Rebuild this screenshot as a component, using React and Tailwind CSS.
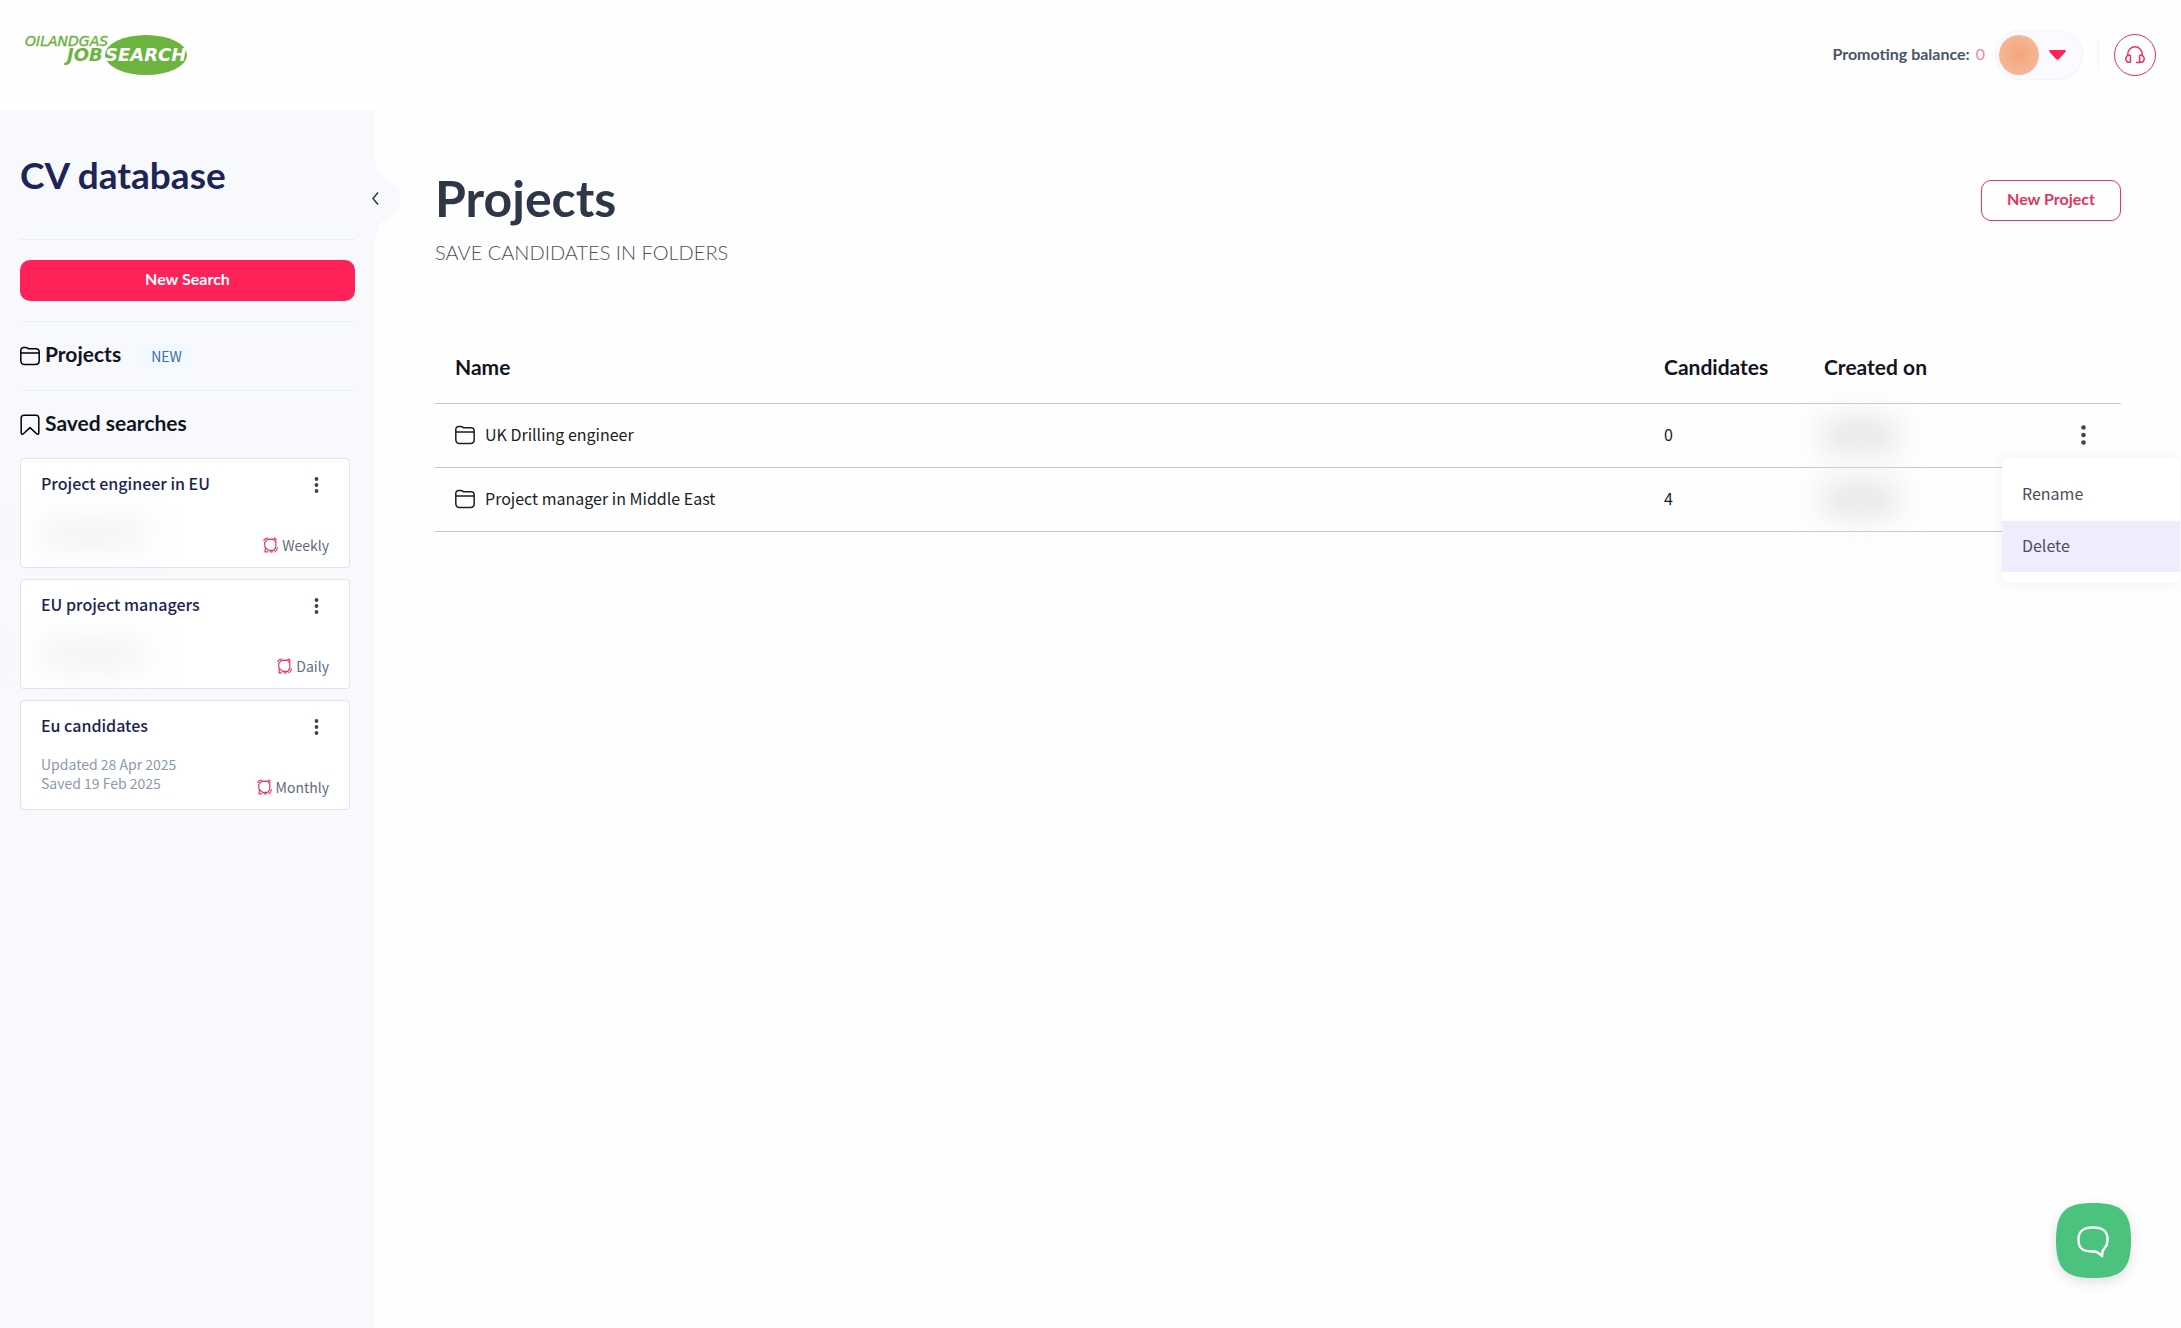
import React, { useState } from "react";

const savedSearches = [
  { id: 1, title: "Project engineer in EU", frequency: "Weekly" },
  { id: 2, title: "EU project managers", frequency: "Daily" },
  { id: 3, title: "Eu candidates", frequency: "Monthly", updated: "28 Apr 2025", saved: "19 Feb 2025" },
];

const projects = [
  { id: 1, name: "UK Drilling engineer", candidates: 0 },
  { id: 2, name: "Project manager in Middle East", candidates: 4 },
];

function Logo() {
  return (
    <svg width="172" height="48" viewBox="-4 -4 172 48" role="img" aria-label="Oil and Gas Job Search">
      <ellipse cx="122" cy="20" rx="41" ry="20" fill="#6cb33f" />
      <g fontFamily='"DejaVu Sans", sans-serif' fontStyle="italic">
        <text x="1" y="11" fontSize="14" fill="#6cb33f" stroke="#6cb33f" strokeWidth="0.4">OILANDGAS</text>
        <text x="43" y="26" fontSize="18" fontWeight="700" fill="#6cb33f">JOB</text>
        <text x="81" y="26" fontSize="18" fontWeight="700" fill="#fff">SEARCH</text>
      </g>
    </svg>
  );
}

function FolderIcon() {
  return (
    <svg width="20" height="20" viewBox="0 0 20 20" fill="none" stroke="currentColor" strokeWidth="1.5" strokeLinejoin="round" className="shrink-0">
      <path d="M.8 7V4.4C.8 2.600 2 1.400 3.600 1.400h2.200C7.400 1.400 7.600 2.800 9 2.800h6.800c2 0 3.400 1.200 3.400 3.200v8.600c0 2.400-1.400 4-3.800 4H4.600c-2.400 0-3.800-1.600-3.800-4V7Z" />
      <path d="M.8 7h18.400" />
    </svg>
  );
}

function BookmarkIcon() {
  return (
    <svg width="20" height="22" viewBox="0 0 20 22" fill="none" stroke="currentColor" strokeWidth="1.500" strokeLinejoin="round" className="shrink-0">
      <path d="M1.200 4c0-1.800 1-2.800 2.800-2.800h12c1.800 0 2.800 1 2.800 2.800v14.800c0 1.600-1.200 2-2.200 1L10 13.600l-6.600 6.200c-1 1-2.200.6-2.200-1V4Z" />
    </svg>
  );
}

function AlarmIcon() {
  return (
    <svg width="15" height="16" viewBox="0 0 15 16" fill="none" stroke="#e5345d" strokeWidth="1.200" strokeLinecap="round" strokeLinejoin="round">
      <path d="M4.500 2.400 10.500 2.200 12.800 5v5.200L10.800 13.400H5.600L2 10.200 1.600 5.600Z" />
      <path d="M.8 3.400C1.400 2 2.600 1.200 4.600 1M11.400 1.200c1 .2 1.600.8 1.800 2M2.400 11.600 2 14.800h2.600M14.400 10.800c-.2 1.800-1 3.200-2.400 4M7 14.800h2.400" />
    </svg>
  );
}

function DotsIcon() {
  return (
    <svg width="5" height="20" viewBox="0 0 5 20" fill="currentColor">
      <circle cx="2.500" cy="2.500" r="2.300" />
      <circle cx="2.500" cy="10" r="2.300" />
      <circle cx="2.500" cy="17.500" r="2.300" />
    </svg>
  );
}

function HeadsetIcon() {
  return (
    <svg width="20" height="18" viewBox="0 0 20 18" fill="none" stroke="#e5345d" strokeWidth="1.500" strokeLinecap="round" strokeLinejoin="round">
      <path d="M2.800 9.600V8a7.200 7.200 0 0 1 14.400 0v1.600" />
      <path d="M5.400 9.400v6.800c-3 .6-4.600-1-4.600-3.400s1.600-4 4.600-3.400ZM14.600 9.400v6.800c3 .6 4.600-1 4.600-3.400s-1.600-4-4.600-3.400ZM14.600 16.600h-3" />
    </svg>
  );
}

function Header() {
  return (
    <header className="flex h-[111px] shrink-0 items-center justify-between border-b border-[#fbfbfd] pr-[25px] pl-5">
      <a href="#home">
        <Logo />
      </a>
      <div className="flex items-center">
        <p className="mr-[10px] flex gap-1.5 pb-0.5 text-base font-bold text-[#4a5568]">
          Promoting balance: <span className="font-normal text-[#f7879f]">0</span>
        </p>
        <button type="button" aria-label="Account" className="flex h-[50px] w-[88px] items-center gap-2.5 rounded-full border border-[#f3f3f8] bg-[#fafaff] pl-[3px]">
          <span className="size-10 rounded-full bg-radial from-[#f4a57c] to-[#f7bd9f]" />
          <svg width="17" height="10" viewBox="0 0 17 10" fill="#ff2259">
            <path d="M1.500 0h14c1.300 0 1.800 1.200.9 2.100L10 9.100c-.9.900-2.100.9-3 0L.6 2.100C-.3 1.200.2 0 1.500 0Z" />
          </svg>
        </button>
        <div className="mx-[15px] h-8 w-px bg-[#f5f5f8]" />
        <button type="button" aria-label="Support" className="flex size-[42px] items-center justify-center rounded-full border border-[#e5345d]">
          <HeadsetIcon />
        </button>
      </div>
    </header>
  );
}

function SearchCard({ search }) {
  return (
    <li className="flex h-[110px] flex-col justify-between rounded border border-[#dfe3ec] bg-white px-5 pt-3 pb-3">
      <div className="flex items-center justify-between">
        <h3 className="pb-1 font-['Noto_Sans_CJK_SC',sans-serif] text-base leading-6 font-medium text-[#1c2350]">{search.title}</h3>
        <button type="button" aria-label={`Options for ${search.title}`} className="mr-2 flex h-7 items-center text-[#3c4450]">
          <svg width="9" height="16" viewBox="0 0 9 16" fill="currentColor">
            <circle cx="4.500" cy="2" r="1.900" />
            <circle cx="4.500" cy="8" r="1.900" />
            <circle cx="4.500" cy="14" r="1.900" />
          </svg>
        </button>
      </div>
      <div className="flex items-end justify-between">
        {search.updated ? (
          <div className="pb-1 text-sm leading-[19px] text-[#8d99ab]">
            <p>Updated {search.updated}</p>
            <p>Saved {search.saved}</p>
          </div>
        ) : (
          <div className="mb-2 h-7 w-26 bg-[#eff1f4] blur-lg" />
        )}
        <p className="flex items-center gap-1 text-sm leading-5 text-[#5f6b7c]">
          <AlarmIcon />
          {search.frequency}
        </p>
      </div>
    </li>
  );
}

function Sidebar() {
  return (
    <aside className="relative w-[375px] shrink-0 bg-[#f7f9fd] px-5 font-['Noto_Sans_CJK_SC',sans-serif]">
      <button type="button" aria-label="Collapse sidebar" className="absolute top-9 left-full text-[#2d3748]">
        <svg width="26" height="104" viewBox="0 0 26 104" className="overflow-visible">
          <path d="M0 0C0 20 2 27 12 32C22 37 26 44 26 52C26 60 22 67 12 72C2 77 0 84 0 104Z" fill="#f7f9fd" />
          <path d="M3 45.500l-5 6 5 6" fill="none" stroke="currentColor" strokeWidth="1.500" />
        </svg>
      </button>
      <h2 className="border-b border-[#eceff5] pt-10 pb-10 font-['Lato',sans-serif] text-[37px] leading-12 font-bold text-[#1c2458]">CV database</h2>
      <div className="border-b border-[#eceff5] py-5">
        <button type="button" className="h-[41px] w-full rounded-[10px] bg-[#ff2259] pb-1 font-['Lato',sans-serif] text-base font-bold text-white">
          New Search
        </button>
      </div>
      <a href="#projects" className="flex h-[69px] items-center gap-[5px] border-b border-[#eceff5]">
        <FolderIcon />
        <span className="pb-1 font-['Lato',sans-serif] text-[21px] leading-7 font-bold text-[#12141f]">Projects</span>
        <span className="ml-4 rounded bg-[#f0f9ff] px-[9px] text-sm leading-6 text-[#3d6e9e]">NEW</span>
      </a>
      <div className="flex h-[67px] items-center gap-[5px]">
        <BookmarkIcon />
        <h2 className="pb-1 font-['Lato',sans-serif] text-[21px] leading-7 font-bold text-[#12141f]">Saved searches</h2>
      </div>
      <ul className="mr-[5px] flex flex-col gap-[11px]">
        {savedSearches.map((s) => (
          <SearchCard key={s.id} search={s} />
        ))}
      </ul>
    </aside>
  );
}

function RowMenu() {
  return (
    <div role="menu" className="absolute top-[54px] left-[calc(100%-119px)] z-10 w-[178px] rounded-lg bg-white pt-3 pb-[11px] shadow-[0_0_16px_rgba(0,0,0,0.06)]">
      <button type="button" role="menuitem" className="block h-[51px] w-full px-5 pb-1 text-left text-[#4a5060] hover:bg-[#f0ecfd]">
        Rename
      </button>
      <button type="button" role="menuitem" className="block h-[51px] w-full bg-[#f0ecfd] px-5 pb-0.5 text-left text-[#4a5060]">
        Delete
      </button>
    </div>
  );
}

function ProjectsTable() {
  const [openId, setOpenId] = useState(1);

  return (
    <table className="mt-[66px] w-full table-fixed border-collapse text-left text-[#1a1d24]">
      <thead>
        <tr className="h-[71px] border-b border-[#c9cbd0] font-['Lato',sans-serif] text-[21px] text-[#12141f]">
          <th className="px-5 pb-0.5 font-bold">Name</th>
          <th className="w-40 pb-0.5 font-bold">Candidates</th>
          <th className="w-40 pb-0.5 font-bold">Created on</th>
          <th className="w-[137px]" aria-label="Actions" />
        </tr>
      </thead>
      <tbody className="font-['Noto_Sans_CJK_SC',sans-serif] text-base">
        {projects.map((p) => (
          <tr key={p.id} className="h-16 border-b border-[#c9cbd0]">
            <td className="px-5">
              <div className="flex items-center gap-[10px]">
                <FolderIcon />
                <span className="pb-0.5">{p.name}</span>
              </div>
            </td>
            <td className="pb-0.5">{p.candidates}</td>
            <td>
              <div className="h-6 w-18 bg-[#dadbdf] blur-lg" />
            </td>
            <td className="relative">
              <button
                type="button"
                aria-label={`Options for ${p.name}`}
                onClick={() => setOpenId(openId === p.id ? null : p.id)}
                className="mr-[35px] ml-auto flex text-[#3c4450]"
              >
                <DotsIcon />
              </button>
              {openId === p.id && <RowMenu />}
            </td>
          </tr>
        ))}
      </tbody>
    </table>
  );
}

export default function App() {
  return (
    <div className="flex min-h-screen flex-col overflow-x-hidden bg-[#fefefe] font-['Lato',sans-serif]">
      <Header />
      <div className="flex grow">
        <Sidebar />
        <main className="min-w-0 grow px-[60px] pt-[57px]">
          <div className="flex items-start justify-between">
            <div>
              <h1 className="text-[50px] leading-[60px] font-bold text-[#2d3748]">Projects</h1>
              <p className="mt-[10px] text-xl leading-7 font-light text-[#4a5060] uppercase">Save candidates in folders</p>
            </div>
            <button type="button" className="mt-3 h-[41px] rounded-[10px] border border-[#e5345d] px-[25px] pb-1 text-base font-bold text-[#e5345d]">
              New Project
            </button>
          </div>
          <ProjectsTable />
        </main>
      </div>
      <button type="button" aria-label="Open chat" className="fixed right-[50px] bottom-[50px] drop-shadow-[0_4px_6px_rgba(0,0,0,0.12)]">
        <svg width="75" height="75" viewBox="0 0 75 75" fill="none">
          <path d="M37.500 0C66 0 75 9 75 37.500S66 75 37.500 75 0 66 0 37.500 9 0 37.500 0Z" fill="#4bc27d" />
          <path
            d="M37 24.500c-9.500 0-14.500 3-14.500 12.300 0 9.200 4.800 11.700 14.400 11.700 2.400 0 3.800.2 5 1.200l4.200 3.500.4-4.500c.2-1.600 1-2.400 2-3.400 2-2.200 3.100-4.900 3.100-8.500 0-9.300-5.200-12.300-14.600-12.300Z"
            stroke="#fff"
            strokeWidth="2.400"
            strokeLinejoin="round"
          />
        </svg>
      </button>
    </div>
  );
}
